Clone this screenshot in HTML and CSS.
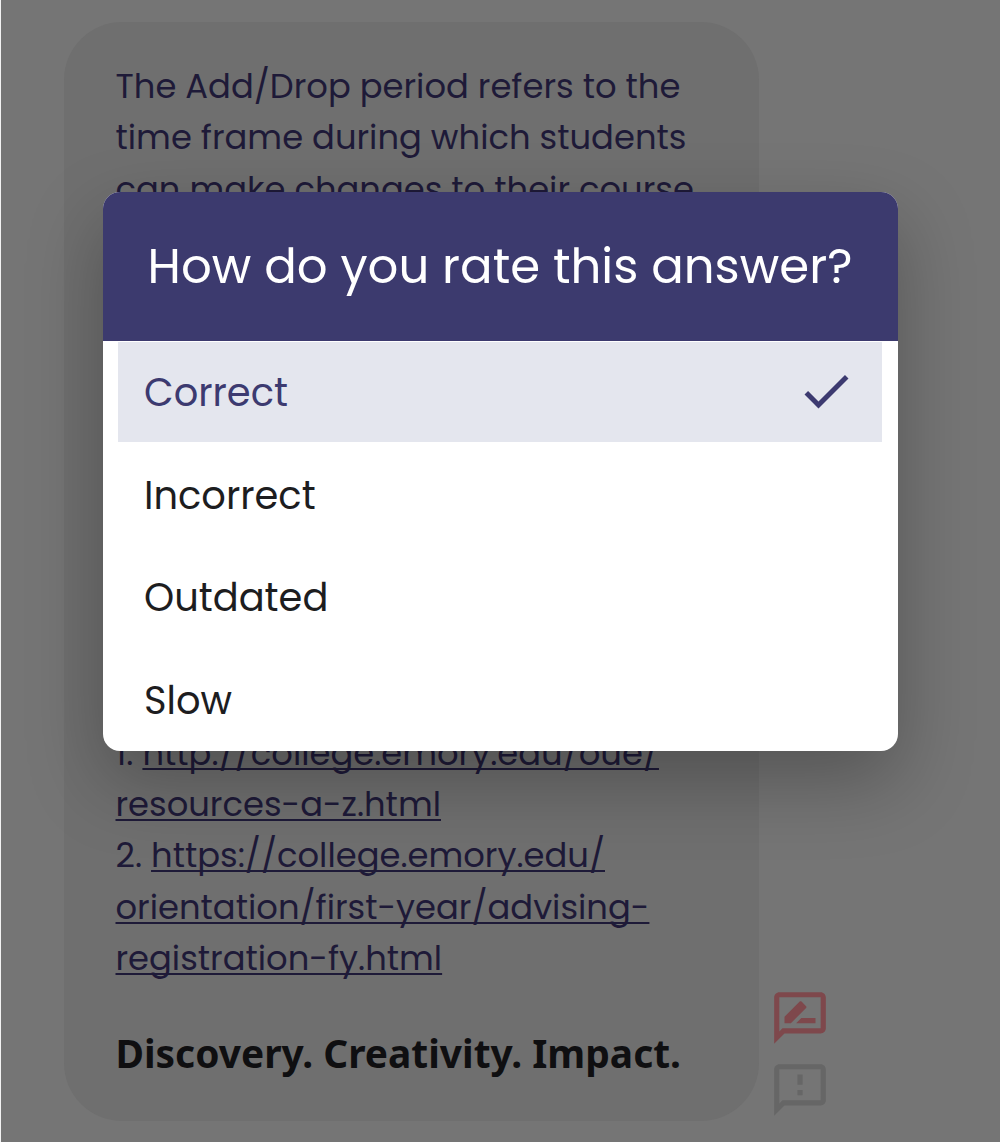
FILE: index.html
```
<!DOCTYPE html>
<html lang="en">
<head>
<meta charset="utf-8">
<title>Rate answer</title>
<link rel="stylesheet" href="styles.css">
</head>
<body>
<main class="chat">
  <article class="bubble">
    <p class="copy">
      <span class="line">The Add/Drop period refers to the</span>
      <span class="line">time frame during which students</span>
      <span class="line">can make changes to their course</span>
    </p>
    <div class="sources">
      <p class="copy">
        <span class="line">1. <a>http://college.emory.edu/oue/</a></span>
        <span class="line"><a>resources-a-z.html</a></span>
        <span class="line">2. <a>https://college.emory.edu/</a></span>
        <span class="line"><a>orientation/first-year/advising-</a></span>
        <span class="line"><a>registration-fy.html</a></span>
      </p>
      <p class="motto">Discovery. Creativity. Impact.</p>
    </div>
  </article>
  <aside class="actions">
    <svg class="icon rate" viewBox="0 0 24 24"><path d="M20 2H4c-1.1 0-2 .9-2 2v18l4-4h14c1.1 0 2-.9 2-2V4c0-1.1-.9-2-2-2zm0 14H5.2L4 17.2V4h16zM12.5 12l-2 2H18v-2zM14.36 8.13c.2-.2.2-.51 0-.71l-1.77-1.77c-.2-.2-.51-.2-.71 0L6 11.53V14h2.47z"/></svg>
    <svg class="icon report" viewBox="0 0 24 24"><path d="M20 2H4c-1.1 0-2 .9-2 2v18l4-4h14c1.1 0 2-.9 2-2V4c0-1.1-.9-2-2-2zm0 14H5.2L4 17.2V4h16zM11 12h2v2h-2zm0-6h2v4h-2z"/></svg>
  </aside>
</main>
<section class="dialog" role="dialog">
  <h1 class="title">How do you rate this answer?</h1>
  <ul class="options">
    <li class="option selected">Correct<svg class="check" viewBox="0 0 24 24"><path d="M9 16.17L4.83 12l-1.42 1.41L9 19 21 7l-1.41-1.41z"/></svg></li>
    <li class="option">Incorrect</li>
    <li class="option">Outdated</li>
    <li class="option">Slow</li>
  </ul>
</section>
</body>
</html>
```
FILE: styles.css
```
* { box-sizing: border-box; }
body {
  margin: 0;
  height: 1142px;
  overflow: hidden;
  position: relative;
  background: #757575;
  border-left: 1px solid #f2f2f2;
  font-family: Poppins, Inter, sans-serif;
  font-feature-settings: "cv11";
}
p, h1, ul { margin: 0; padding: 0; }
.chat { display: flex; height: 1142px; padding: 22px 0 21px 63px; }
.bubble {
  width: 695px;
  padding: 39px 0 0 51.5px;
  border-radius: 58px;
  background: #6f6f6f;
}
.copy { color: #1e1a38; font-size: 33.77px; font-weight: 400; line-height: 51.3px; }
.line { display: block; white-space: pre; }
.sources { padding-top: 513px; }
.copy a {
  text-decoration: underline;
  text-decoration-thickness: 2px;
  text-underline-offset: 3px;
  text-decoration-skip-ink: none;
}
.motto {
  padding-top: 43px;
  color: #0f0f11;
  font: 700 38.9px/52px "Noto Sans", sans-serif;
  white-space: nowrap;
}
.actions { display: flex; flex-direction: column; justify-content: flex-end; gap: 10px; padding-left: 10px; }
.icon { width: 62px; height: 62px; }
.rate { fill: #7e484c; }
.report { fill: #666; }
.dialog {
  position: absolute;
  left: 101.5px;
  top: 192px;
  width: 795px;
  height: 558.5px;
  overflow: hidden;
  border-radius: 17px;
  background: #fff;
  box-shadow: 0 30px 76px rgba(0, 0, 0, .27);
}
.title {
  height: 148.5px;
  background: #3c3a6e;
  color: #fff;
  font-size: 48.2px;
  font-weight: 400;
  line-height: 149px;
  text-align: center;
  white-space: nowrap;
}
.options { display: flex; flex-direction: column; gap: 3.1px; padding: 1.5px 15.5px 0; list-style: none; }
.option {
  display: flex;
  align-items: center;
  justify-content: space-between;
  height: 99.5px;
  padding: 1.4px 26px 0;
  color: #1d1d1f;
  font-size: 38.4px;
  font-weight: 400;
}
.selected { background: #e4e6ee; color: #3c3a70; }
.check { width: 60px; height: 60px; margin: 0 .5px 2px 0; fill: currentColor; }
```
